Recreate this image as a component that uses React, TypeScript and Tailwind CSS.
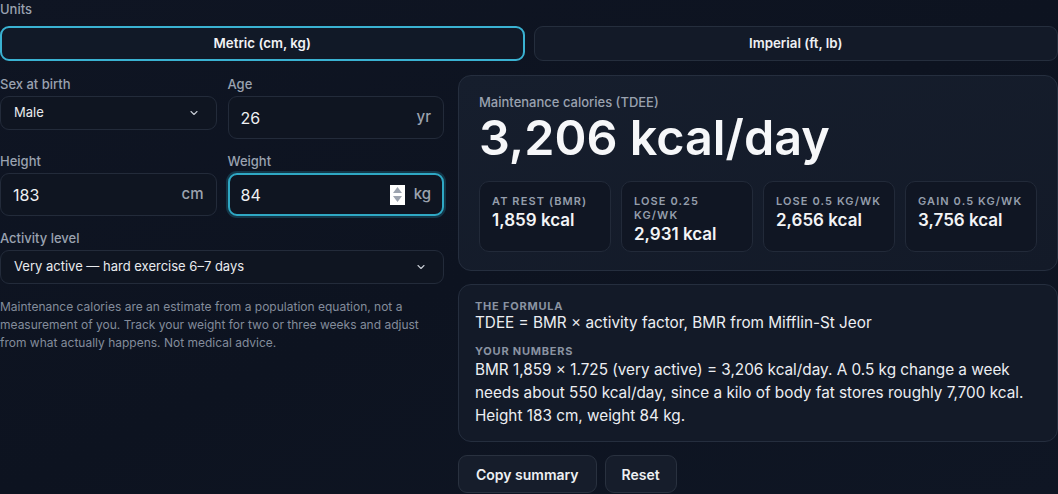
import React from "react";

const Chevron = () => (
  <svg width="12" height="12" viewBox="0 0 24 24" fill="none" stroke="#c7ccd4" strokeWidth="2.2" strokeLinecap="round" strokeLinejoin="round">
    <path d="M6 9l6 6 6-6" />
  </svg>
);

const Label = ({ children }: { children: React.ReactNode }) => (
  <div className="h-[18px] mb-[3px] text-[13px] leading-[18px] font-medium text-[#9aa2b0]">{children}</div>
);

const Select = ({ value }: { value: string }) => (
  <div className="h-[34px] flex items-center justify-between rounded-[9px] border border-[#232b3a] bg-[#0f1521] pl-[13px] pr-[16px] text-[13px] text-[#e8eaee]">
    <span>{value}</span>
    <Chevron />
  </div>
);

const NumInput = ({ value, unit, focused, spinner }: { value: string; unit: string; focused?: boolean; spinner?: boolean }) => (
  <div
    className={
      focused
        ? "h-[43px] flex items-center rounded-[9px] border-2 border-[#2fa8c4] bg-[#0f1521] pl-[11px] pr-[11px] shadow-[0_0_0_2px_rgba(40,160,190,0.25)]"
        : "h-[43px] flex items-center rounded-[9px] border border-[#232b3a] bg-[#0f1521] pl-[12px] pr-[12px]"
    }
  >
    <span className="flex-1 text-[16px] text-[#eef0f3]">{value}</span>
    {spinner && (
      <span className="mr-[9px] w-[15px] h-[20px] bg-white flex flex-col items-center justify-center gap-[3px]">
        <svg width="9" height="6" viewBox="0 0 9 6"><path d="M4.5 0L9 6H0z" fill="#9ca3af" /></svg>
        <svg width="9" height="6" viewBox="0 0 9 6"><path d="M0 0h9L4.5 6z" fill="#9ca3af" /></svg>
      </span>
    )}
    <span className="text-[15px] font-medium text-[#9ca3af]">{unit}</span>
  </div>
);

const Stat = ({ label, value }: { label: React.ReactNode; value: string }) => (
  <div className="h-[71px] rounded-[10px] border border-[#222a39] bg-[#101623] px-3 pt-3">
    <div className="text-[11px] leading-[14px] font-semibold tracking-[0.1em] whitespace-nowrap text-[#959eac]">{label}</div>
    <div className="mt-[1px] text-[17px] leading-[22px] font-semibold text-[#f3f4f6]">{value}</div>
  </div>
);

export default function App() {
  return (
    <div
      className="w-[1058px] h-[494px] overflow-hidden bg-gradient-to-br from-[#0f1523] via-[#0d1320] to-[#0f1624] text-[#eef0f3]"
      style={{ fontFamily: "Inter, 'Noto Sans', sans-serif" }}
    >
      <div className="h-[18px] mb-2 text-[13px] leading-[18px] font-medium text-[#9aa2b0]">Units</div>
      <div className="grid grid-cols-2 gap-[9px]">
        <div className="h-[35px] flex items-center justify-center rounded-[9px] border-2 border-[#3ab2d2] bg-[#111927] text-[13.3px] font-semibold text-[#f1f3f6]">
          Metric (cm, kg)
        </div>
        <div className="h-[35px] flex items-center justify-center rounded-[9px] border border-[#252e3d] bg-[#131a28] text-[13.3px] font-semibold text-[#eef0f3]">
          Imperial (ft, lb)
        </div>
      </div>

      <div className="mt-[14px] grid grid-cols-[444px_1fr] gap-[14px]">
        {/* Left column */}
        <div>
          <div className="grid grid-cols-2 gap-x-[11px] gap-y-[13px] items-start">
            <div>
              <Label>Sex at birth</Label>
              <Select value="Male" />
            </div>
            <div>
              <Label>Age</Label>
              <NumInput value="26" unit="yr" />
            </div>
            <div>
              <Label>Height</Label>
              <NumInput value="183" unit="cm" />
            </div>
            <div>
              <Label>Weight</Label>
              <NumInput value="84" unit="kg" focused spinner />
            </div>
          </div>
          <div className="mt-[13px]">
            <Label>Activity level</Label>
            <Select value="Very active — hard exercise 6–7 days" />
          </div>
          <p className="mt-[14px] text-[12px] leading-[18px] text-[#838c9b]">
            Maintenance calories are an estimate from a population equation, not a measurement of you. Track your weight for two or three weeks and adjust from what actually happens. Not medical advice.
          </p>
        </div>

        {/* Right column */}
        <div className="flex flex-col gap-[13px]">
          <div className="rounded-[13px] border border-[#252e3e] bg-gradient-to-br from-[#161e2d] to-[#131a28] px-5 pt-[17px] pb-[18px]">
            <div className="text-[13px] leading-[18px] font-medium text-[#9aa2b0]">Maintenance calories (TDEE)</div>
            <div className="mt-[3px] text-[48.5px] leading-[48px] font-semibold text-[#f6f7f9]">3,206 kcal/day</div>
            <div className="mt-[19px] grid grid-cols-4 gap-[10px]">
              <Stat label="AT REST (BMR)" value="1,859 kcal" />
              <Stat label={<>LOSE 0.25<br />KG/WK</>} value="2,931 kcal" />
              <Stat label="LOSE 0.5 KG/WK" value="2,656 kcal" />
              <Stat label="GAIN 0.5 KG/WK" value="3,756 kcal" />
            </div>
          </div>

          <div className="rounded-[13px] border border-[#252e3e] bg-[#131a28] px-4 pt-[14px] pb-[14px]">
            <div className="text-[11px] leading-[14px] font-bold tracking-[0.07em] text-[#8a93a2]">THE FORMULA</div>
            <div className="text-[15.3px] leading-[20px] text-[#eceef2]">TDEE = BMR × activity factor, BMR from Mifflin-St Jeor</div>
            <div className="mt-[11px] text-[11px] leading-[14px] font-bold tracking-[0.07em] text-[#8a93a2]">YOUR NUMBERS</div>
            <div className="text-[15.3px] leading-[23px] text-[#eceef2]">
              BMR 1,859 × 1.725 (very active) = 3,206 kcal/day. A 0.5 kg change a week needs about 550 kcal/day, since a kilo of body fat stores roughly 7,700 kcal. Height 183 cm, weight 84 kg.
            </div>
          </div>

          <div className="flex gap-2">
            <div className="h-[38px] px-[17px] flex items-center rounded-[9px] border border-[#29313f] bg-[#161d2b] text-[14px] font-semibold text-[#eef0f3]">Copy summary</div>
            <div className="h-[38px] px-[16px] flex items-center rounded-[9px] border border-[#29313f] bg-[#161d2b] text-[14px] font-semibold text-[#eef0f3]">Reset</div>
          </div>
        </div>
      </div>
    </div>
  );
}
